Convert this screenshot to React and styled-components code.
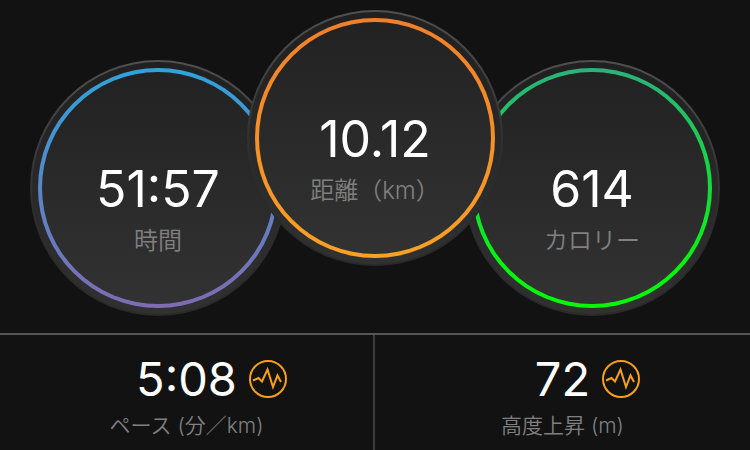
import React from "react";
import styled, { createGlobalStyle } from "styled-components";

const dials = [
  { value: "51:57", label: "時間", from: "#2fa3dc", to: "#7f6bb3" },
  { value: "10.12", label: "距離（km）", from: "#f07f2a", to: "#f9a125", front: true },
  { value: "614", label: "カロリー", from: "#2bb27c", to: "#05f80c 85%" },
];

const stats = [
  { value: "5:08", label: "ペース (分／km)", name: "ペースのグラフ" },
  { value: "72", label: "高度上昇 (m)", name: "高度のグラフ" },
];

const PulseIcon = () => (
  <svg width="38" height="38" viewBox="0 0 38 38" fill="none" stroke="#f9a01b" aria-hidden="true">
    <circle cx="19" cy="19" r="18" strokeWidth="2" />
    <path d="M4 20.5 L9.5 18 L13 21.5 L18.5 9.5 L24 27 L28.5 15.5 L32 22" strokeWidth="2" />
  </svg>
);

const App = () => {
  return (
    <>
      <GlobalStyle />
      <Summary>
        {dials.map((dial) => (
          <Dial key={dial.label} $front={dial.front}>
            <Ring $from={dial.from} $to={dial.to}>
              <DialValue>{dial.value}</DialValue>
              <DialLabel>{dial.label}</DialLabel>
            </Ring>
          </Dial>
        ))}
      </Summary>
      <Stats>
        {stats.map((stat) => (
          <Stat key={stat.label}>
            <StatRow>
              <StatValue>{stat.value}</StatValue>
              <GraphButton type="button" aria-label={stat.name}>
                <PulseIcon />
              </GraphButton>
            </StatRow>
            <StatLabel>{stat.label}</StatLabel>
          </Stat>
        ))}
      </Stats>
    </>
  );
};

export default App;

// Styled Components
const GlobalStyle = createGlobalStyle`
  * {
    box-sizing: border-box;
  }

  body {
    margin: 0;
    background: #121212;
    color: #fff;
    font-family: Inter, "Noto Sans CJK JP", sans-serif;
  }
`;

const Summary = styled.main`
  display: flex;
  justify-content: center;
  align-items: flex-end;
  padding: 10px 0 17px;
`;

const Dial = styled.section`
  position: relative;
  z-index: ${(props) => (props.$front ? 1 : 0)};
  flex: none;
  display: flex;
  width: 256px;
  height: 256px;
  margin: ${(props) => (props.$front ? "0 -39px 50px" : "0")};
  padding: 6px;
  border: 2px solid transparent;
  border-radius: 50%;
  background: linear-gradient(#202020, #313131) padding-box,
    linear-gradient(#505050, #2c2c2c 60%, #2a2a2a) border-box;
`;

const Ring = styled.div`
  flex: 1;
  display: flex;
  flex-direction: column;
  align-items: center;
  gap: 8px;
  padding-top: 89px;
  border: 4px solid transparent;
  border-radius: 50%;
  background: linear-gradient(#222, #323232) padding-box,
    linear-gradient(${(props) => props.$from}, ${(props) => props.$to}) border-box;
`;

const DialValue = styled.div`
  font-size: 50px;
  line-height: 56px;
`;

const DialLabel = styled.div`
  color: #808080;
  font-size: 24px;
  font-weight: 350;
  line-height: 32px;
  white-space: nowrap;
`;

const Stats = styled.footer`
  display: grid;
  grid-template-columns: 1fr 1fr;
  border-top: 2px solid #555;
`;

const Stat = styled.section`
  padding: 16px 0 8px;
  text-align: center;

  &:first-child {
    border-right: 2px solid #3c3c3c;
  }
`;

const StatRow = styled.div`
  display: grid;
  grid-template-columns: 1fr auto 1fr;
  align-items: center;
  column-gap: 12px;
`;

const StatValue = styled.div`
  grid-column: 2;
  font-size: 47px;
  line-height: 56px;
`;

const GraphButton = styled.button`
  display: flex;
  justify-self: start;
  padding: 0;
  border: none;
  background: none;
  cursor: pointer;
`;

const StatLabel = styled.div`
  margin-top: 3px;
  color: #808080;
  font-size: 21px;
  font-weight: 350;
  line-height: 32px;
`;
